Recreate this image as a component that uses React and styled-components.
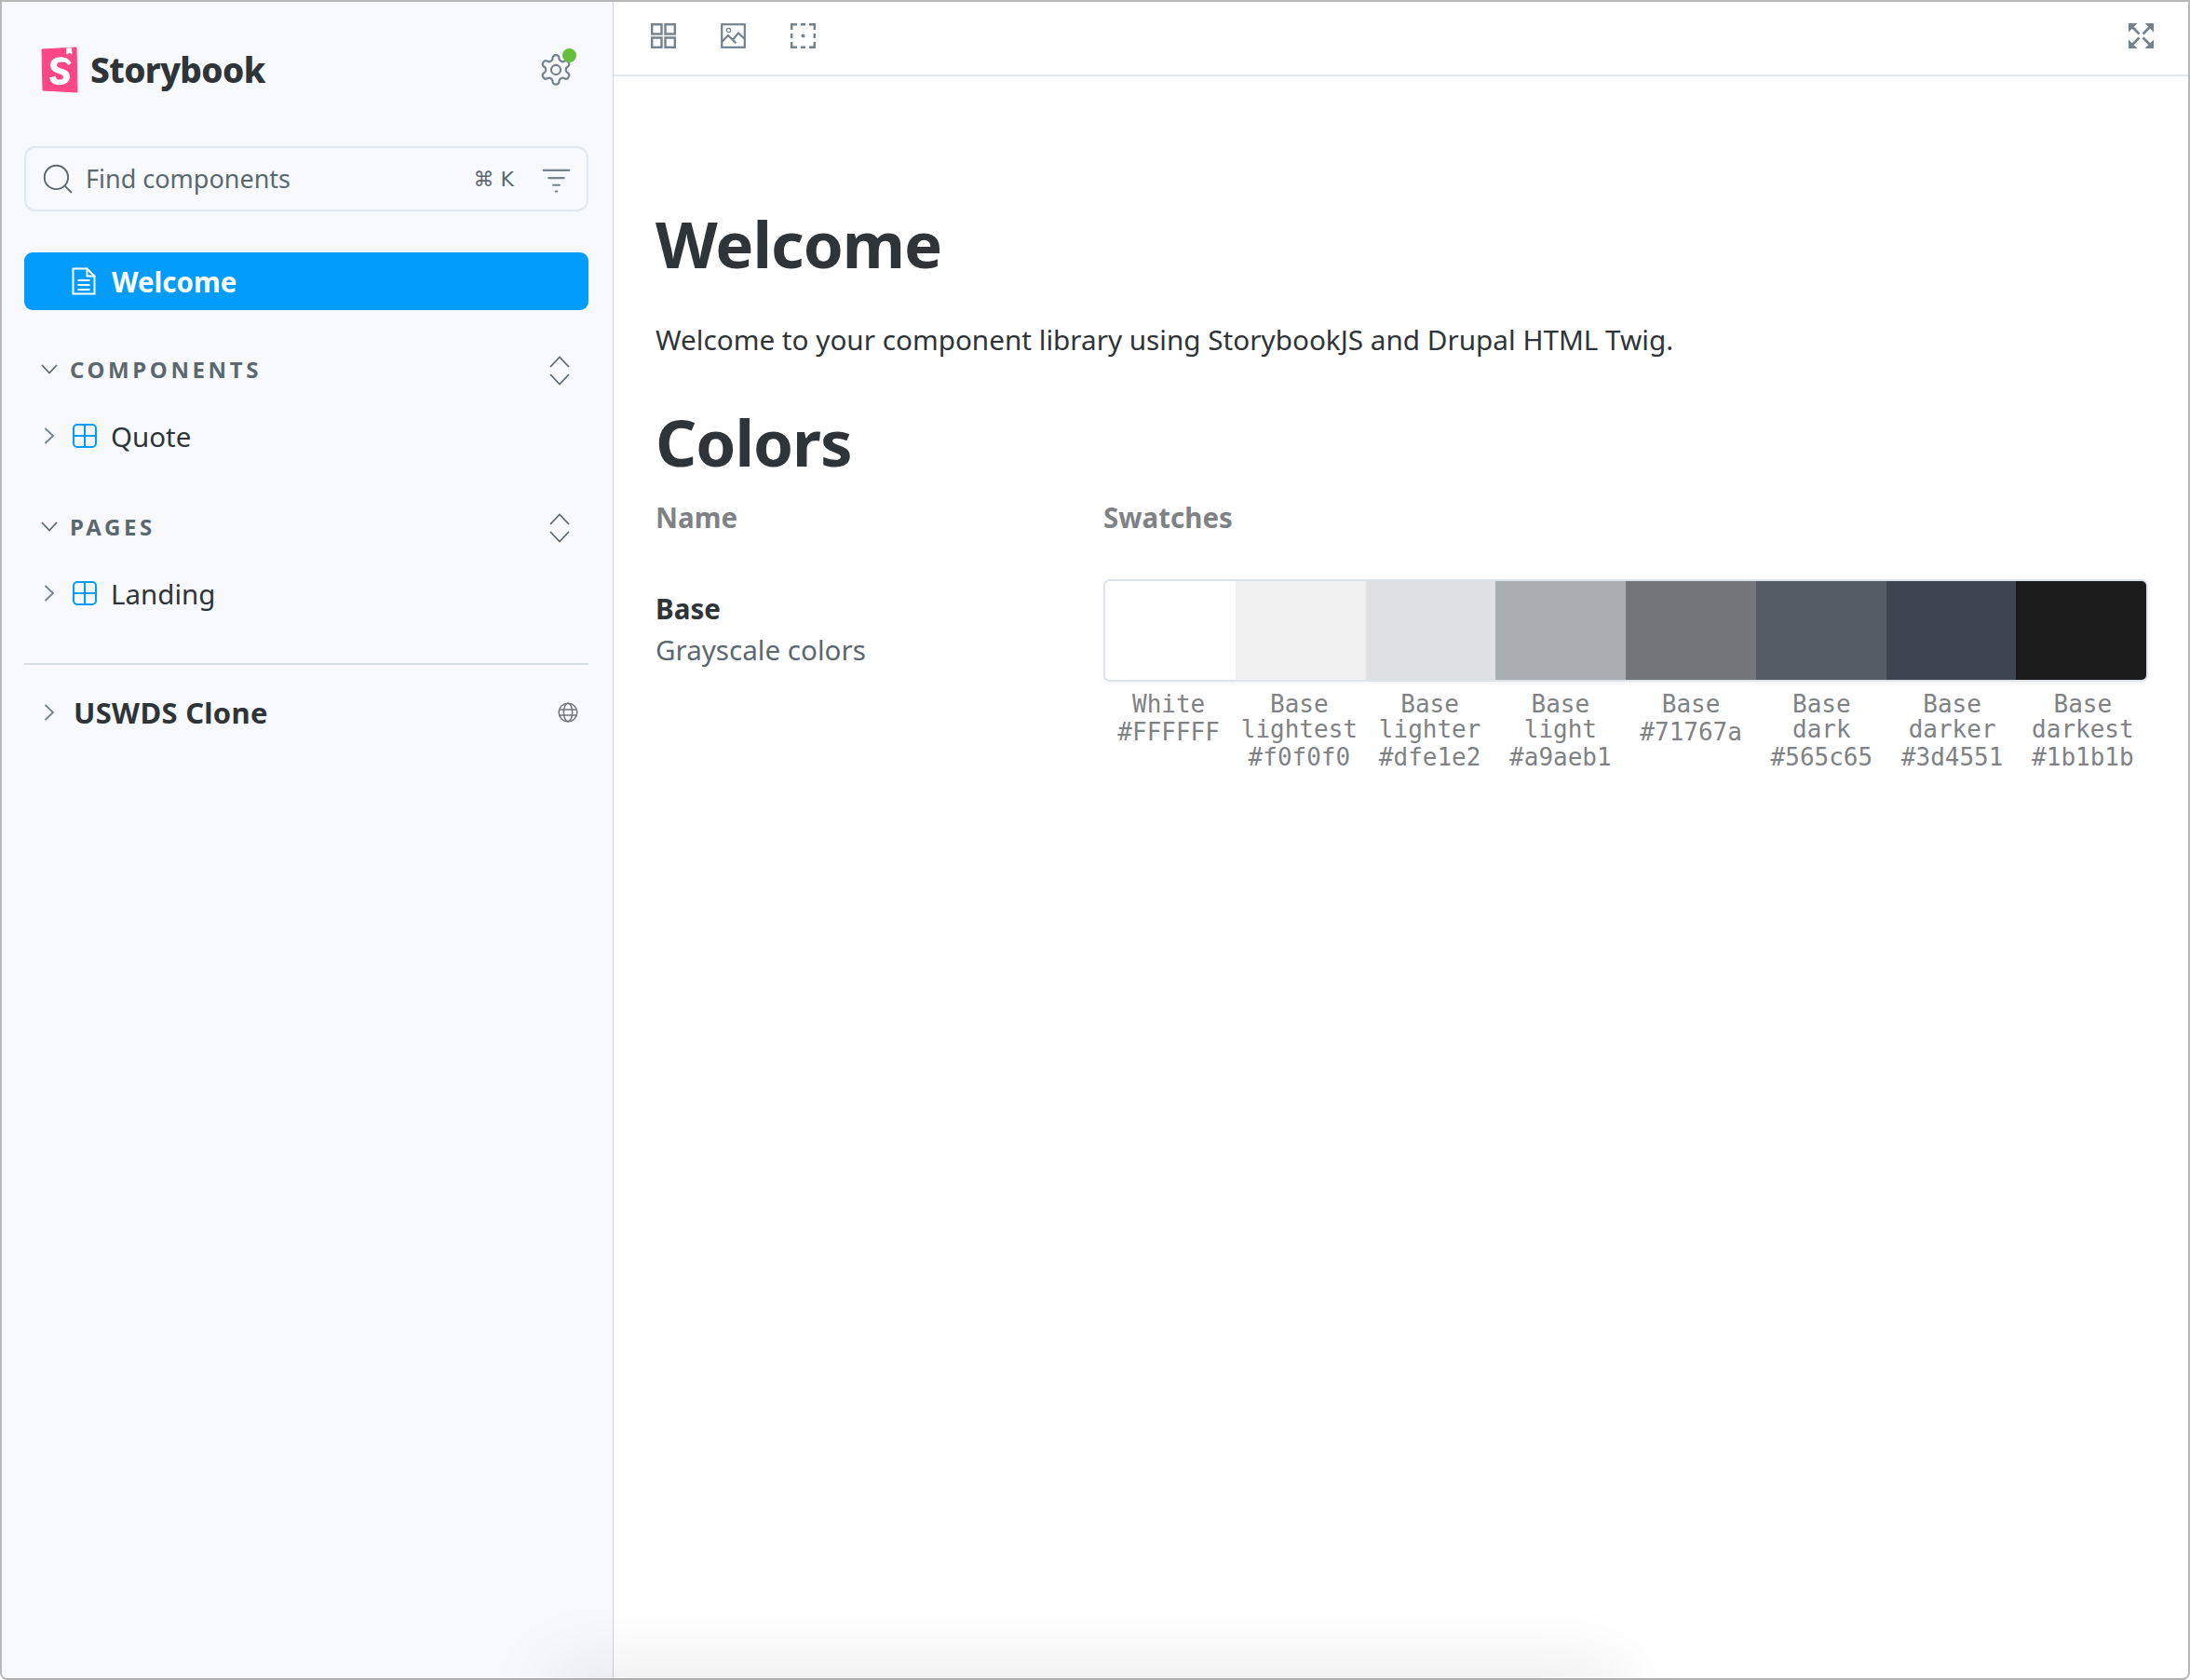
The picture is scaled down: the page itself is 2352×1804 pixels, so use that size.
import React from "react";
import styled, { createGlobalStyle } from "styled-components";
import { Search } from "lucide-react";

const GlobalStyle = createGlobalStyle`
  html, body {
    margin: 0;
    padding: 0;
    background: #fff;
  }
  body {
    font-family: "Noto Sans", "Open Sans", sans-serif;
    color: #2e3438;
  }
`;

const Frame = styled.div`
  width: 2352px;
  height: 1804px;
  box-sizing: border-box;
  position: relative;
  overflow: hidden;
  display: flex;
  border-top: 2px solid #b8b8b8;
  border-left: 2px solid #b8b8b8;
  border-right: 2px solid #b8b8b8;
  border-bottom: 2px solid #b0b0b0;
  border-radius: 0 0 8px 8px;
  background: #fff;
`;

const BottomShade = styled.div`
  position: absolute;
  left: 600px;
  width: 1130px;
  bottom: -40px;
  height: 40px;
  box-shadow: 0 0 80px 8px rgba(0, 0, 0, 0.1);
  pointer-events: none;
`;

const Sidebar = styled.aside`
  width: 657px;
  flex: none;
  box-sizing: border-box;
  background: #f7f9fd;
  border-right: 1px solid #cfd5da;
  padding: 0 26px 0 24px;
  display: flex;
  flex-direction: column;
`;

const Brand = styled.div`
  height: 155px;
  flex: none;
  box-sizing: border-box;
  display: flex;
  align-items: center;
  justify-content: space-between;
  padding: 0 16px 9px 18px;
`;

const BrandLeft = styled.div`
  display: flex;
  align-items: center;
  gap: 13px;
`;

const BrandName = styled.span`
  font-size: 37px;
  font-weight: 800;
  letter-spacing: -0.6px;
  line-height: 48px;
  color: #2e3438;
`;

const GearWrap = styled.div`
  position: relative;
  width: 38px;
  height: 38px;
`;

const StatusDot = styled.span`
  position: absolute;
  top: -4px;
  right: -3px;
  width: 15px;
  height: 15px;
  border-radius: 50%;
  background: #66bf3c;
`;

const SearchBox = styled.div`
  height: 70px;
  flex: none;
  box-sizing: border-box;
  border: 2px solid #dfe9f3;
  border-radius: 12px;
  display: flex;
  align-items: center;
  padding: 0 16px 0 15px;
`;

const SearchText = styled.span`
  flex: 1;
  margin: 0 0 2px 11px;
  font-size: 27px;
  color: #5c6870;
`;

const Shortcut = styled.span`
  font-size: 22px;
  color: #5c6870;
  margin-right: 29px;
  font-family: "DejaVu Sans", sans-serif;
`;

const ActiveRow = styled.div`
  height: 62px;
  flex: none;
  margin-top: 44px;
  border-radius: 9px;
  background: #029cfd;
  color: #fff;
  display: flex;
  align-items: center;
  padding-left: 51px;
  gap: 17px;
  font-size: 29.5px;
  font-weight: 700;
`;

const Section = styled.section`
  margin-top: ${(p) => p.$top}px;
`;

const SectionHead = styled.div`
  height: 40px;
  display: flex;
  align-items: center;
  padding: 0 20px 0 18px;
  color: #5c6870;
`;

const SectionTitle = styled.span`
  flex: 1;
  margin-left: 13px;
  font-size: 24px;
  font-weight: 700;
  letter-spacing: 3.6px;
`;

const UnfoldSvg = styled.svg`
  margin-top: 3px;
`;

const TreeRow = styled.div`
  height: 44px;
  margin-top: 30px;
  display: flex;
  align-items: center;
  padding-left: 21px;
  font-size: 29.5px;
  color: #2e3438;
`;

const TreeIcon = styled.span`
  display: flex;
  margin: 0 15px 0 19px;
`;

const Divider = styled.div`
  height: 2px;
  flex: none;
  background: #d8dfe4;
  margin-top: 53px;
`;

const RefRow = styled.div`
  margin-top: 29px;
  height: 44px;
  display: flex;
  align-items: center;
  padding: 0 11px 0 21px;
`;

const RefName = styled.span`
  flex: 1;
  margin-left: 20px;
  font-size: 31px;
  font-weight: 700;
  letter-spacing: 0.3px;
`;

const Main = styled.main`
  flex: 1;
  min-width: 0;
  display: flex;
  flex-direction: column;
`;

const Toolbar = styled.div`
  height: 80px;
  flex: none;
  box-sizing: border-box;
  border-bottom: 2px solid #e3e7ea;
  display: flex;
  align-items: center;
  justify-content: space-between;
  padding: 0 37px 5px 40px;
`;

const ToolGroup = styled.div`
  display: flex;
  gap: 48px;
`;

const Doc = styled.div`
  padding: 0 43px 0 45px;
`;

const Heading = styled.h1`
  margin: ${(p) => p.$top}px 0 0;
  font-size: 69px;
  line-height: 90px;
  font-weight: 700;
  letter-spacing: -1px;
  color: #2e3438;
`;

const Intro = styled.p`
  margin: 37px 0 0;
  font-size: 29.7px;
  line-height: 44px;
  color: #2e3438;
`;

const ColorGrid = styled.div`
  display: grid;
  grid-template-columns: 481px 1fr;
`;

const ColHead = styled.div`
  margin-top: 15px;
  font-size: 29.5px;
  line-height: 44px;
  font-weight: 700;
  color: #7f8285;
`;

const ColorInfo = styled.div`
  margin-top: 54px;
  font-size: 29.6px;
  line-height: 44px;
  color: #5c6870;
`;

const ColorName = styled.div`
  font-weight: 700;
  color: #2e3438;
`;

const SwatchBlock = styled.div`
  margin-top: 44px;
`;

const SwatchBar = styled.div`
  height: 110px;
  box-sizing: border-box;
  border: 2px solid #dde3e8;
  border-radius: 7px;
  overflow: hidden;
  display: grid;
  grid-template-columns: repeat(8, 1fr);
  box-shadow: 0 2px 6px rgba(0, 0, 0, 0.05);
`;

const SwatchColor = styled.div`
  background: ${(p) => p.$color};
`;

const LabelRow = styled.div`
  display: grid;
  grid-template-columns: repeat(8, 1fr);
  margin-top: 11px;
`;

const Label = styled.div`
  text-align: center;
  font-family: "DejaVu Sans Mono", monospace;
  font-size: 26px;
  line-height: 27px;
  color: #7f8285;
`;

const LabelHex = styled.div`
  margin-top: 3px;
`;

const stroke = "#73828c";

const Logo = () => (
  <svg width="40" height="50" viewBox="0 0 40 50">
    <path d="M1 3 38 1 39 49 2 47Z" fill="#ff4785" stroke="#ff4785" strokeLinejoin="round" />
    <path d="M27 1.5 27.5 9 30.5 6.8 33.500 8.800 33 1.200Z" fill="#fff" />
    <path
      d="M29.500 20c-1.300-2.600-4-3.600-7.500-3.600-2.700 0-5 1.200-5 3.400 0 5.400 14 2.500 14 12.500 0 6.300-5.700 9-11 9-5.800 0-10-2.500-11-8l6.500-1.500c.6 3 2.200 3.800 4.500 3.800 2.300 0 4-.8 4-2.800 0-5-13.900-2.800-13.900-12.800 0-5.600 5-8.800 10.900-8.800 5.200 0 9.500 2 11.500 6.500Z"
      fill="#fff"
    />
  </svg>
);

const Gear = () => (
  <svg width="38" height="38" viewBox="0 0 24 24" fill="none" stroke="#73828c" strokeWidth="1.400" strokeLinecap="round" strokeLinejoin="round">
    <path d="M12.200 2h-.4a2 2 0 0 0-2 2v.2a2 2 0 0 1-1 1.700l-.4.300a2 2 0 0 1-2 0l-.2-.1a2 2 0 0 0-2.700.7l-.2.400a2 2 0 0 0 .7 2.700l.2.100a2 2 0 0 1 1 1.700v.500a2 2 0 0 1-1 1.700l-.2.100a2 2 0 0 0-.7 2.700l.2.400a2 2 0 0 0 2.700.7l.2-.1a2 2 0 0 1 2 0l.4.300a2 2 0 0 1 1 1.700v.2a2 2 0 0 0 2 2h.4a2 2 0 0 0 2-2v-.2a2 2 0 0 1 1-1.700l.4-.3a2 2 0 0 1 2 0l.2.100a2 2 0 0 0 2.700-.7l.2-.4a2 2 0 0 0-.7-2.700l-.2-.1a2 2 0 0 1-1-1.700v-.5a2 2 0 0 1 1-1.700l.2-.1a2 2 0 0 0 .7-2.700l-.2-.4a2 2 0 0 0-2.700-.7l-.2.100a2 2 0 0 1-2 0l-.4-.3a2 2 0 0 1-1-1.700V4a2 2 0 0 0-2-2Z" />
    <circle cx="12" cy="12" r="3.200" />
  </svg>
);

const FilterIcon = () => (
  <svg width="33" height="33" viewBox="0 0 24 24" fill="none" stroke="#73828c" strokeWidth="1.500" strokeLinecap="round">
    <path d="M2 5h20M6 11h12M9.500 16.500h5M11.500 21.500h1" />
  </svg>
);

const DocIcon = () => (
  <svg width="26" height="30" viewBox="0 0 26 30" fill="none" stroke="#fff" strokeWidth="2">
    <path d="M1.500 1.500h15l8 8v19h-23Z" />
    <path d="M16.500 1.500v8h8M6.500 14h13M6.500 19h13M6.500 24h13" />
  </svg>
);

const ComponentIcon = () => (
  <svg width="26" height="26" viewBox="0 0 26 26" fill="none" stroke="#029cfd" strokeWidth="2">
    <rect x="1" y="1" width="24" height="24" rx="4" />
    <path d="M13 1v24M1 13h24" />
  </svg>
);

const Globe = () => (
  <svg width="22" height="22" viewBox="0 0 22 22" fill="none" stroke="#73767a" strokeWidth="1.500">
    <circle cx="11" cy="11" r="9.800" />
    <ellipse cx="11" cy="11" rx="4.600" ry="9.800" />
    <path d="M1.500 8h19M1.500 14h19" />
  </svg>
);

const GridIcon = () => (
  <svg width="27" height="27" viewBox="0 0 27 27" fill="none" stroke={stroke} strokeWidth="2.400">
    <rect x="1.200" y="1.200" width="10.300" height="10.300" />
    <rect x="15.500" y="1.200" width="10.300" height="10.300" />
    <rect x="1.200" y="15.500" width="10.300" height="10.300" />
    <rect x="15.500" y="15.500" width="10.300" height="10.300" />
  </svg>
);

const ImageIcon = () => (
  <svg width="27" height="27" viewBox="0 0 27 27" fill="none" stroke={stroke} strokeWidth="2.200">
    <rect x="1.200" y="1.200" width="24.600" height="24.600" />
    <circle cx="8.500" cy="7.500" r="2.200" strokeWidth="1.200" />
    <path d="M1 20l7-7 8.500 8.500M13 17.500l6-7 7 6.500" />
  </svg>
);

const OutlineIcon = () => (
  <svg width="27" height="27" viewBox="0 0 27 27" fill="none" stroke={stroke} strokeWidth="2.400">
    <path d="M7 1.200H1.200V7M1.200 11v5M1.200 20v5.800H7M11 25.800h5M20 25.800h5.800V20M25.800 16v-5M25.800 7V1.200H20M16 1.200h-5" />
    <circle cx="13.500" cy="13.500" r="2" fill={stroke} stroke="none" />
  </svg>
);

const ExpandIcon = () => (
  <svg width="27" height="27" viewBox="0 0 27 27" fill={stroke} stroke="none">
    <path d="M0 0h9.500L0 9.500ZM27 0v9.500L17.500 0ZM0 27v-9.500L9.500 27ZM27 27h-9.500L27 17.500Z" />
    <path d="M3 3l8.500 8.500M24 3l-8.500 8.500M3 24l8.500-8.500M24 24l-8.500-8.500" stroke={stroke} strokeWidth="2.800" fill="none" />
  </svg>
);

const SectionChevron = () => (
  <svg width="18" height="11" viewBox="0 0 18 11" fill="none" stroke="currentColor" strokeWidth="1.800">
    <path d="M1 1l8 8.500 8-8.500" />
  </svg>
);

const RowChevron = () => (
  <svg width="12" height="18" viewBox="0 0 12 18" fill="none" stroke="#73828c" strokeWidth="1.800">
    <path d="M1.500 1l8.500 8-8.500 8" />
  </svg>
);

const UnfoldIcon = () => (
  <UnfoldSvg width="22" height="32" viewBox="0 0 22 32" fill="none" stroke="currentColor" strokeWidth="1.800">
    <path d="M1 12L11 1.500 21 12M1 20l10 10.500L21 20" />
  </UnfoldSvg>
);

const swatches = [
  { name: ["White"], hex: "#FFFFFF", color: "#FFFFFF" },
  { name: ["Base", "lightest"], hex: "#f0f0f0", color: "#f0f0f0" },
  { name: ["Base", "lighter"], hex: "#dfe1e2", color: "#dfe1e2" },
  { name: ["Base", "light"], hex: "#a9aeb1", color: "#a9aeb1" },
  { name: ["Base"], hex: "#71767a", color: "#71767a" },
  { name: ["Base", "dark"], hex: "#565c65", color: "#565c65" },
  { name: ["Base", "darker"], hex: "#3d4551", color: "#3d4551" },
  { name: ["Base", "darkest"], hex: "#1b1b1b", color: "#1b1b1b" },
];

const App = () => (
  <Frame>
    <GlobalStyle />
    <Sidebar>
      <Brand>
        <BrandLeft>
          <Logo />
          <BrandName>Storybook</BrandName>
        </BrandLeft>
        <GearWrap>
          <Gear />
          <StatusDot />
        </GearWrap>
      </Brand>
      <SearchBox>
        <Search size={38} strokeWidth={1.200} color="#5c6870" />
        <SearchText>Find components</SearchText>
        <Shortcut>⌘ K</Shortcut>
        <FilterIcon />
      </SearchBox>
      <ActiveRow>
        <DocIcon />
        Welcome
      </ActiveRow>
      <Section $top={43}>
        <SectionHead>
          <SectionChevron />
          <SectionTitle>COMPONENTS</SectionTitle>
          <UnfoldIcon />
        </SectionHead>
        <TreeRow>
          <RowChevron />
          <TreeIcon>
            <ComponentIcon />
          </TreeIcon>
          Quote
        </TreeRow>
      </Section>
      <Section $top={55}>
        <SectionHead>
          <SectionChevron />
          <SectionTitle>PAGES</SectionTitle>
          <UnfoldIcon />
        </SectionHead>
        <TreeRow>
          <RowChevron />
          <TreeIcon>
            <ComponentIcon />
          </TreeIcon>
          Landing
        </TreeRow>
      </Section>
      <Divider />
      <RefRow>
        <RowChevron />
        <RefName>USWDS Clone</RefName>
        <Globe />
      </RefRow>
    </Sidebar>
    <Main>
      <Toolbar>
        <ToolGroup>
          <GridIcon />
          <ImageIcon />
          <OutlineIcon />
        </ToolGroup>
        <ExpandIcon />
      </Toolbar>
      <Doc>
        <Heading $top={134}>Welcome</Heading>
        <Intro>Welcome to your component library using StorybookJS and Drupal HTML Twig.</Intro>
        <Heading $top={42}>Colors</Heading>
        <ColorGrid>
          <ColHead>Name</ColHead>
          <ColHead>Swatches</ColHead>
          <ColorInfo>
            <ColorName>Base</ColorName>
            Grayscale colors
          </ColorInfo>
          <SwatchBlock>
            <SwatchBar>
              {swatches.map((s) => (
                <SwatchColor key={s.hex} $color={s.color} />
              ))}
            </SwatchBar>
            <LabelRow>
              {swatches.map((s) => (
                <Label key={s.hex}>
                  {s.name.map((line) => (
                    <div key={line}>{line}</div>
                  ))}
                  <LabelHex>{s.hex}</LabelHex>
                </Label>
              ))}
            </LabelRow>
          </SwatchBlock>
        </ColorGrid>
      </Doc>
    </Main>
    <BottomShade />
  </Frame>
);

export default App;
